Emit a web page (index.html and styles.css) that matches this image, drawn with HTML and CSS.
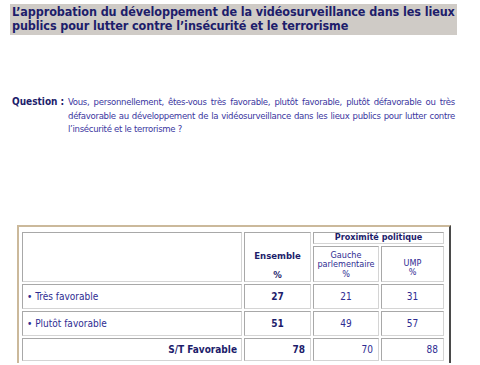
FILE: index.html
```html
<!DOCTYPE html>
<html lang="fr">
<head>
<meta charset="utf-8">
<link rel="stylesheet" href="styles.css">
</head>
<body>
<h1 class="title">L’approbation du développement de la vidéosurveillance dans les lieux publics pour lutter contre l’insécurité et le terrorisme</h1>
<div class="question">
  <div class="q-label">Question :</div>
  <p class="q-text">Vous, personnellement, êtes-vous très favorable, plutôt favorable, plutôt défavorable ou très défavorable au développement de la vidéosurveillance dans les lieux publics pour lutter contre l’insécurité et le terrorisme ?</p>
</div>
<div class="frame">
  <table class="results">
    <colgroup>
      <col class="c1"><col class="c2"><col class="c3"><col class="c4">
    </colgroup>
    <tr class="r-head1">
      <td rowspan="2"></td>
      <td rowspan="2" class="ens"><div class="ens-inner"><b>Ensemble</b><b>%</b></div></td>
      <th colspan="2" class="prox">Proximité politique</th>
    </tr>
    <tr class="r-head2">
      <td class="sub"><div class="sub-gauche">Gauche<br>parlementaire<br>%</div></td>
      <td class="sub"><div class="sub-ump">UMP<br>%</div></td>
    </tr>
    <tr class="r-row">
      <td class="lab">• Très favorable</td>
      <td class="num bold">27</td>
      <td class="num">21</td>
      <td class="num">31</td>
    </tr>
    <tr class="r-row">
      <td class="lab">• Plutôt favorable</td>
      <td class="num bold">51</td>
      <td class="num">49</td>
      <td class="num">57</td>
    </tr>
    <tr class="r-tot">
      <td class="tot-lab">S/T Favorable</td>
      <td class="tot bold">78</td>
      <td class="tot">70</td>
      <td class="tot">88</td>
    </tr>
  </table>
</div>
</body>
</html>
```
FILE: styles.css
```css
html, body {
  margin: 0;
  padding: 0;
  background: #ffffff;
}
body {
  width: 480px;
  height: 365px;
  overflow: hidden;
  font-family: "DejaVu Sans Condensed", "DejaVu Sans", sans-serif;
  font-stretch: condensed;
}
.title {
  margin: 4px 0 0 10px;
  width: 447px;
  box-sizing: border-box;
  padding: 1px 2px 2px 2px;
  background: #cfcbc6;
  color: #1d1d6b;
  font-size: 12.5px;
  letter-spacing: -0.1px;
  line-height: 14px;
  font-weight: bold;
}
.question {
  display: flex;
  margin: 60px 0 0 12px;
  width: 443px;
}
.q-label {
  width: 56px;
  flex: none;
  color: #1d1d6b;
  font-weight: bold;
  font-size: 10px;
  line-height: 13.5px;
}
.q-text {
  margin: 0;
  color: #3a36a0;
  font-size: 9.5px;
  letter-spacing: -0.3px;
  line-height: 13.5px;
  text-align: justify;
}
.frame {
  margin: 89px 0 0 17px;
  width: 428px;
  border-top: 2px solid #cbb99b;
  border-left: 2px solid #cbb99b;
  border-right: 2px solid #4a4a4a;
  padding: 3px 1px 0 1px;
}
.results {
  border-collapse: separate;
  border-spacing: 2px;
  width: 426px;
  table-layout: fixed;
  color: #2e2c92;
  font-size: 9px;
}
.c1 { width: 220px; }
.c2 { width: 67px; }
.c3 { width: 66px; }
.c4 { width: 63px; }
.results td, .results th {
  border: 1px solid #a8a8a8;
  border-right-color: #d4d4d4;
  border-bottom-color: #d4d4d4;
  padding: 0;
}
.r-head1 { height: 12px; }
.r-head2 { height: 34px; }
.r-row { height: 25px; }
.r-tot { height: 23px; }
.prox {
  font-size: 9px;
  font-weight: bold;
  color: #1d1d6b;
  text-align: center;
  line-height: 9px;
}
.ens {
  vertical-align: top;
}
.ens-inner {
  display: flex;
  flex-direction: column;
  align-items: center;
  gap: 7px;
  padding-top: 17px;
  color: #1d1d6b;
  font-size: 9.5px;
  line-height: 12px;
}
.sub {
  text-align: center;
  vertical-align: top;
  font-size: 9px;
  line-height: 9.5px;
}
.sub-gauche { padding-top: 4px; }
.sub-ump { padding-top: 12px; }
.lab {
  padding-left: 4px !important;
  font-size: 10px;
}
.num {
  text-align: center;
  font-size: 10px;
}
.bold {
  font-weight: bold;
  color: #1d1d6b;
}
.tot-lab {
  text-align: right;
  font-weight: bold;
  color: #1d1d6b;
  font-size: 10px;
  padding-right: 4px !important;
}
.tot {
  text-align: right;
  font-size: 10px;
  padding-right: 5px !important;
}
```
